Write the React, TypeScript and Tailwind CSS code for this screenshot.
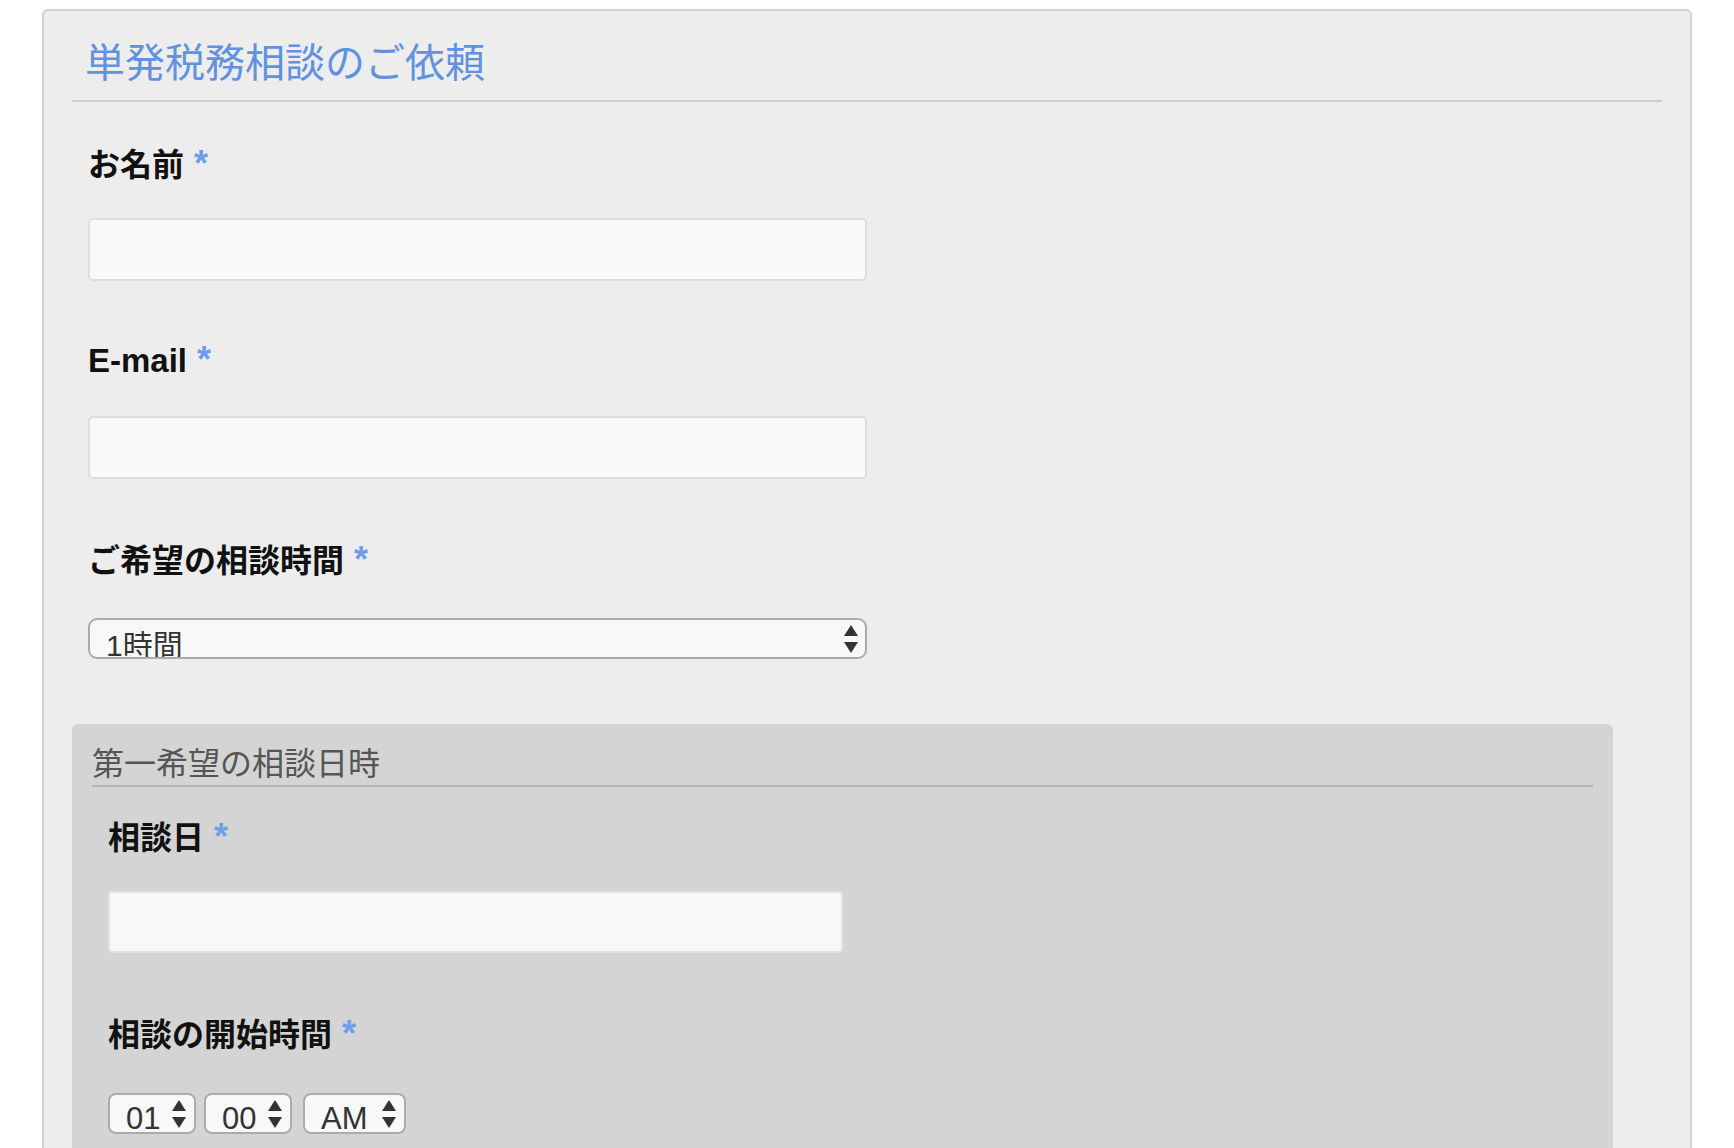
import React from "react";

const jp = { fontFamily: '"Noto Sans CJK JP", "Liberation Sans", sans-serif' };
const mixed = { fontFamily: '"Liberation Sans", "Noto Sans CJK JP", sans-serif' };

function Arrows({ className = "" }: { className?: string }) {
  return (
    <svg width="14" height="28" viewBox="0 0 14 28" className={className}>
      <polygon points="7,0 14,11 0,11" fill="#333" />
      <polygon points="0,17 14,17 7,28" fill="#333" />
    </svg>
  );
}

function Label({ text, latin = false }: { text: string; latin?: boolean }) {
  return (
    <div
      className={`h-[36px] leading-[36px] ${latin ? "text-[33px]" : "text-[32px]"} font-bold text-[#111] whitespace-nowrap`}
      style={latin ? mixed : jp}
    >
      {text}
      <span className="text-[36px] text-[#6b9de8]" style={mixed}>
        {" "}*
      </span>
    </div>
  );
}

function TextInput({ w, h }: { w: string; h: string }) {
  return (
    <div
      className={`${w} ${h} mt-[38px] rounded-[5px] border-2 border-[#dedede] bg-[#f9f9f9]`}
    />
  );
}

function SmallSelect({ text, w }: { text: string; w: string }) {
  return (
    <div
      className={`relative ${w} h-[41px] overflow-hidden rounded-[8px] border-2 border-[#ababab] bg-[#f8f8f8]`}
    >
      <div
        className="pl-[16px] pt-[9px] text-[31px] leading-[30px] text-[#333]"
        style={mixed}
      >
        {text}
      </div>
      <Arrows className="absolute right-[8px] top-[5px]" />
    </div>
  );
}

export default function App() {
  return (
    <div className="min-h-screen bg-white pt-[9px]">
      <div className="mx-[42px] rounded-[6px] border-2 border-[#d2d2d2] bg-[#ededed] px-[28px] pt-[25px] pb-[60px]">
        <div className="border-b-2 border-[#cbcbcb] pb-[16px]">
          <h1
            className="h-[48px] pl-[13px] text-[40px] leading-[48px] font-normal text-[#6192e0]"
            style={jp}
          >
            単発税務相談のご依頼
          </h1>
        </div>

        <div className="pl-[16px] pt-[42px]">
          <Label text="お名前" />
          <TextInput w="w-[779px]" h="h-[63px]" />
        </div>

        <div className="pl-[16px] pt-[61px]">
          <Label text="E-mail" latin />
          <TextInput w="w-[779px]" h="h-[63px]" />
        </div>

        <div className="pl-[16px] pt-[61px]">
          <Label text="ご希望の相談時間" />
          <div className="relative mt-[42px] h-[41px] w-[779px] overflow-hidden rounded-[9px] border-2 border-[#ababab] bg-[#f8f8f8]">
            <div
              className="pl-[16px] pt-[11px] text-[30px] leading-[30px] text-[#333]"
              style={mixed}
            >
              1時間
            </div>
            <Arrows className="absolute right-[7px] top-[5px]" />
          </div>
        </div>

        <div className="mt-[65px] w-[1541px] rounded-[6px] bg-[#d4d4d4] px-[20px] pt-[17px] pb-[60px]">
          <div className="border-b-2 border-[#b3b3b3] pb-[4px]">
            <div
              className="h-[40px] text-[32px] leading-[40px] text-[#555]"
              style={jp}
            >
              第一希望の相談日時
            </div>
          </div>

          <div className="pl-[16px] pt-[30px]">
            <Label text="相談日" />
            <div className="mt-[38px] h-[62px] w-[735px] rounded-[4px] border-2 border-[#e2e2e2] bg-[#f8f8f8]" />
          </div>

          <div className="pl-[16px] pt-[61px]">
            <Label text="相談の開始時間" />
            <div className="mt-[43px] flex">
              <SmallSelect text="01" w="w-[88px]" />
              <div className="ml-[8px]">
                <SmallSelect text="00" w="w-[88px]" />
              </div>
              <div className="ml-[11px]">
                <SmallSelect text="AM" w="w-[103px]" />
              </div>
            </div>
          </div>
        </div>
      </div>
    </div>
  );
}
